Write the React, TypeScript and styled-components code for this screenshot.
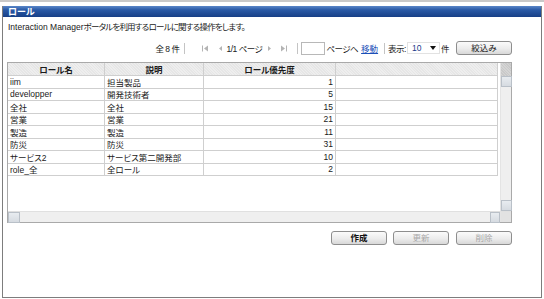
import styled, { createGlobalStyle } from 'styled-components'

const GlobalStyle = createGlobalStyle`
  html, body {
    margin: 0;
    padding: 0;
    background: #ffffff;
  }
  body {
    font-family: "Liberation Sans", "Noto Sans CJK JP", sans-serif;
    font-size: 8.5px;
    color: #1a1a1a;
    font-feature-settings: "palt";
  }
`

const Page = styled.div`
  width: 544px;
  height: 299px;
  box-sizing: border-box;
  border-top: 2px solid #c9c9c9;
  padding: 4px 2px 1px 2px;
  display: flex;
`

const Panel = styled.div`
  flex: 1;
  display: flex;
  flex-direction: column;
  border: 1px solid #7d7d7d;
  border-top: none;
`

const TitleBar = styled.div`
  height: 11px;
  display: flex;
  align-items: center;
  padding-left: 5px;
  background: linear-gradient(#5a86c8 0%, #2a5aa6 35%, #173f86 100%);
  color: #ffffff;
  font-weight: bold;
  font-size: 9px;
`

const Content = styled.div`
  display: flex;
  flex-direction: column;
  padding: 0 29px 0 4px;
`

const Description = styled.div`
  padding: 4px 0 0 1px;
  line-height: 13px;
`

const Ja = styled.span`
  letter-spacing: -0.8px;
`

const Pager = styled.div`
  margin-top: 7px;
  height: 14px;
  display: flex;
  align-items: center;
  justify-content: flex-end;
`

const PagerText = styled.span<{ $ml?: number }>`
  margin-left: ${p => p.$ml ?? 0}px;
  white-space: nowrap;
  letter-spacing: -0.5px;
`

const Sep = styled.span<{ $l: number; $r: number }>`
  width: 1px;
  height: 11px;
  background: #c4c4c4;
  margin: 0 ${p => p.$r}px 0 ${p => p.$l}px;
`

const NavIcon = styled.svg<{ $ml?: number }>`
  width: 7px;
  height: 7px;
  margin-left: ${p => p.$ml ?? 0}px;
  fill: #b4b4b4;
`

const PageInput = styled.span`
  width: 24px;
  height: 13px;
  box-sizing: border-box;
  border: 1px solid #b8b8b8;
  background: #ffffff;
  margin-right: 1px;
`

const Link = styled.span`
  color: #1c4fb8;
  text-decoration: underline;
  margin-left: 3px;
`

const Select = styled.span`
  width: 33px;
  height: 12px;
  margin: 0 1px;
  border: 1px solid #e2e2e2;
  display: flex;
  align-items: center;
  justify-content: space-between;
  padding: 0 3px 0 4px;
  box-sizing: border-box;
  color: #1a3a8a;
`

const Caret = styled.span`
  width: 0;
  height: 0;
  border-left: 3px solid transparent;
  border-right: 3px solid transparent;
  border-top: 4px solid #111;
`

const Button = styled.button<{ $disabled?: boolean; $bold?: boolean; $ml?: number }>`
  width: 56px;
  height: 14px;
  padding: 0;
  margin-left: ${p => p.$ml ?? 0}px;
  border: 1px solid #8e8e8e;
  border-radius: 3px;
  background: linear-gradient(#fbfbfb 0%, #ececec 55%, #d8d8d8 100%);
  font-family: "Liberation Sans", "Noto Sans CJK JP", sans-serif;
  font-size: 8.5px;
  font-feature-settings: "palt";
  line-height: 12px;
  color: ${p => (p.$disabled ? '#a8a8a8' : '#111111')};
  font-weight: ${p => (p.$bold ? 'bold' : 'normal')};
`

const Grid = styled.div`
  margin-top: 7px;
  height: 161px;
  box-sizing: border-box;
  border: 1px solid #a9a9a9;
  display: grid;
  grid-template-columns: 1fr 11px;
  grid-template-rows: 1fr 11px;
`

const TableArea = styled.div`
  display: flex;
  flex-direction: column;
  padding-right: 2px;
`

const Row = styled.div<{ $header?: boolean }>`
  display: grid;
  grid-template-columns: 97px 99px 132px 162px;
  height: ${p => (p.$header ? '13px' : '12.5px')};
  background: ${p =>
    p.$header
      ? 'repeating-linear-gradient(45deg, #e6e6e6 0 1px, #eeeeee 1px 2px)'
      : '#ffffff'};
  border-bottom: 1px solid #cfcfcf;
  box-sizing: border-box;
`

const Cell = styled.div<{ $align?: string; $header?: boolean }>`
  border-right: 1px solid #cfcfcf;
  padding: 0 2px;
  display: flex;
  align-items: center;
  justify-content: ${p => p.$align ?? 'flex-start'};
  font-weight: ${p => (p.$header ? 'bold' : 'normal')};
  white-space: nowrap;
  overflow: hidden;
`

const VScroll = styled.div`
  display: flex;
  flex-direction: column;
  background: #efefef;
  border-left: 1px solid #e4e4e4;
`

const VScrollHead = styled.div`
  height: 13px;
  background: repeating-linear-gradient(45deg, #c9c9c9 0 1px, #d4d4d4 1px 2px);
`

const Thumb = styled.div<{ $w?: number; $h?: number }>`
  width: ${p => p.$w ?? 10}px;
  height: ${p => p.$h ?? 10}px;
  box-sizing: border-box;
  border: 1px solid #b9c0c8;
  background: linear-gradient(#e8ecf0, #d6dbe1);
`

const Track = styled.div`
  flex: 1;
`

const HScroll = styled.div`
  display: flex;
  background: #efefef;
  border-top: 1px solid #e0e0e0;
`

const Corner = styled.div`
  background: #e2e2e2;
  border-top: 1px solid #e0e0e0;
  border-left: 1px solid #e4e4e4;
`

const Actions = styled.div`
  margin-top: 8px;
  display: flex;
  justify-content: flex-end;
`

const rows = [
  ['iim', '担当製品', '1'],
  ['developper', '開発技術者', '5'],
  ['全社', '全社', '15'],
  ['営業', '営業', '21'],
  ['製造', '製造', '11'],
  ['防災', '防災', '31'],
  ['サービス2', 'サービス第二開発部', '10'],
  ['role_全', '全ロール', '2'],
]

const First = ({ ml }: { ml?: number }) => (
  <NavIcon $ml={ml} viewBox="0 0 7 7">
    <rect x="0" y="0.5" width="1" height="6" />
    <path d="M6 0.5 L2 3.5 L6 6.5 Z" />
  </NavIcon>
)

const Prev = ({ ml }: { ml?: number }) => (
  <NavIcon $ml={ml} viewBox="0 0 7 7">
    <path d="M5 1 L2 3.5 L5 6 Z" />
  </NavIcon>
)

const Next = ({ ml }: { ml?: number }) => (
  <NavIcon $ml={ml} viewBox="0 0 7 7">
    <path d="M2 1 L5 3.5 L2 6 Z" />
  </NavIcon>
)

const Last = ({ ml }: { ml?: number }) => (
  <NavIcon $ml={ml} viewBox="0 0 7 7">
    <path d="M1 0.5 L5 3.5 L1 6.5 Z" />
    <rect x="6" y="0.5" width="1" height="6" />
  </NavIcon>
)

export default function App() {
  return (
    <>
      <GlobalStyle />
      <Page>
        <Panel>
          <TitleBar>ロール</TitleBar>
          <Content>
            <Description>
              Interaction Manager<Ja>ポータルを利用するロールに関する操作をします。</Ja>
            </Description>
            <Pager>
              <PagerText>全 8 件</PagerText>
              <Sep $l={5} $r={0} />
              <First ml={17} />
              <Prev ml={8} />
              <PagerText $ml={2}>1/1 ページ</PagerText>
              <Next ml={4} />
              <Last ml={7} />
              <Sep $l={10} $r={3} />
              <PageInput />
              <PagerText>ページへ</PagerText>
              <Link>移動</Link>
              <Sep $l={6} $r={3} />
              <PagerText>表示:</PagerText>
              <Select>
                10
                <Caret />
              </Select>
              <PagerText>件</PagerText>
              <Button $ml={7}>絞込み</Button>
            </Pager>
            <Grid>
              <TableArea>
                <Row $header>
                  <Cell $header $align="center">ロール名</Cell>
                  <Cell $header $align="center">説明</Cell>
                  <Cell $header $align="center">ロール優先度</Cell>
                  <Cell $header />
                </Row>
                {rows.map(r => (
                  <Row key={r[0]}>
                    <Cell>{r[0]}</Cell>
                    <Cell>{r[1]}</Cell>
                    <Cell $align="flex-end">{r[2]}</Cell>
                    <Cell />
                  </Row>
                ))}
              </TableArea>
              <VScroll>
                <VScrollHead />
                <Thumb $w={11} $h={11} />
                <Track />
                <Thumb $w={11} $h={11} />
              </VScroll>
              <HScroll>
                <Thumb $w={12} $h={11} />
                <Track />
                <Thumb $w={10} $h={11} />
              </HScroll>
              <Corner />
            </Grid>
            <Actions>
              <Button $bold>作成</Button>
              <Button $disabled $ml={6}>更新</Button>
              <Button $disabled $ml={7}>削除</Button>
            </Actions>
          </Content>
        </Panel>
      </Page>
    </>
  )
}
